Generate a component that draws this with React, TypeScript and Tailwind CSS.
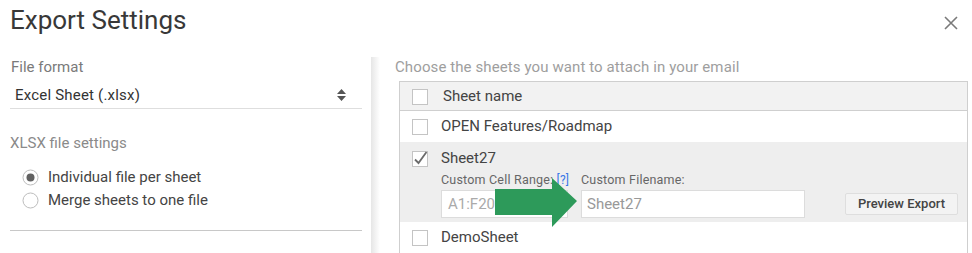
import React from "react";

const Box: React.FC<{ checked?: boolean }> = ({ checked }) => (
  <svg width="17" height="17" viewBox="0 0 17 17" className="shrink-0">
    <rect x="0.5" y="1.5" width="15" height="15" fill="white" stroke="#c4c4c4" />
    {checked && (
      <path d="M3 9.5 L6.5 13 L14.5 2" fill="none" stroke="#6b6b6b" strokeWidth="1.8" />
    )}
  </svg>
);

const Radio: React.FC<{ on?: boolean }> = ({ on }) => (
  <svg width="17" height="17" viewBox="0 0 17 17" className="shrink-0">
    <circle cx="8.5" cy="8.5" r="7.5" fill="white" stroke="#bdbdbd" />
    {on && <circle cx="8.5" cy="8.5" r="4" fill="#616161" />}
  </svg>
);

export default function App() {
  return (
    <div className="relative w-[972px] h-[253px] overflow-hidden bg-white font-['Roboto',sans-serif]">
      <div className="flex h-[52px] items-start justify-between pl-[10px] pr-[14px]">
        <h1 className="mt-[3px] text-[26px] leading-[34px] text-[#383838]">Export Settings</h1>
        <svg width="14" height="14" viewBox="0 0 14 14" className="mt-[16px]">
          <path d="M1 1 L13 13 M13 1 L1 13" stroke="#7a7a7a" strokeWidth="1.6" />
        </svg>
      </div>

      <div className="flex">
        {/* left column */}
        <div className="ml-[10px] w-[352px] pt-[5px]">
          <div className="pl-[1px] text-[15px] leading-[20px] text-[#7a7a7a]">File format</div>
          <div className="flex items-center justify-between border-b border-[#dedede] pt-[8px] pb-[3px] pl-[5px] pr-[16px]">
            <span className="text-[15px] leading-[20px] tracking-[0.2px] text-[#333]">Excel Sheet (.xlsx)</span>
            <svg width="9" height="12" viewBox="0 0 9 12">
              <path d="M4.5 0 L9 5 L0 5 Z M0 7 L9 7 L4.5 12 Z" fill="#555" />
            </svg>
          </div>
          <div className="mt-[24px] text-[15px] leading-[20px] text-[#8a8a8a]">XLSX file settings</div>
          <div className="mt-[13px] pl-[12px]">
            <label className="flex h-[23px] items-center gap-[9px] text-[15px] text-[#444]">
              <Radio on />
              Individual file per sheet
            </label>
            <label className="flex h-[23px] items-center gap-[9px] text-[15px] text-[#444]">
              <Radio />
              Merge sheets to one file
            </label>
          </div>
          <div className="mt-[18px] border-t border-[#c8c8c8]" />
        </div>

        {/* divider */}
        <div className="ml-[9px] mt-[5px] h-[200px] w-[9px] bg-gradient-to-r from-[#e6e6e6] to-white" />

        {/* right column */}
        <div className="ml-[15px] pt-[5px]">
          <div className="whitespace-nowrap text-[15px] leading-[20px] tracking-[0.1px] text-[#9e9e9e]">
            Choose the sheets you want to attach in your email
          </div>
          <div className="ml-[4px] mt-[4px] w-[569px] border border-[#cfcfcf] text-[15px] text-[#444]">
            <div className="flex h-[29px] items-center gap-[14px] border-b border-[#cfcfcf] bg-[#f2f2f2] pl-[12px]">
              <Box />
              <span>Sheet name</span>
            </div>
            <div className="flex h-[31px] items-center gap-[12px] pl-[12px]">
              <Box />
              <span>OPEN Features/Roadmap</span>
            </div>
            <div className="h-[80px] bg-[#eeeeee] pl-[12px]">
              <div className="flex h-[30px] items-center gap-[12px] pt-[2px]">
                <Box checked />
                <span>Sheet27</span>
              </div>
              <div className="flex items-start pl-[29px]">
                <div className="w-[127px]">
                  <div className="whitespace-nowrap text-[12.5px] leading-[16px] tracking-[0.2px] text-[#666]">
                    Custom Cell Range: <span className="text-[12px] text-[#3b78e7]">[?]</span>
                  </div>
                  <div className="mt-[2px] flex h-[28px] items-center border border-[#dcdcdc] bg-white pl-[6px] text-[15px] text-[#aaa]">
                    A1:F20
                  </div>
                </div>
                <div className="ml-[13px] w-[224px]">
                  <div className="whitespace-nowrap text-[12.5px] leading-[16px] tracking-[0.2px] text-[#666]">Custom Filename:</div>
                  <div className="mt-[2px] flex h-[28px] items-center border border-[#dcdcdc] bg-white pl-[5px] text-[15px] text-[#999]">
                    Sheet27
                  </div>
                </div>
                <button className="ml-[40px] mt-[21px] h-[22px] w-[113px] rounded-[2px] border border-[#dedede] bg-[#f3f3f3] text-[13px] font-medium text-[#444]">
                  Preview Export
                </button>
              </div>
            </div>
            <div className="flex h-[31px] items-center gap-[12px] pl-[12px]">
              <Box />
              <span>DemoSheet</span>
            </div>
          </div>
        </div>
      </div>

      {/* green arrow annotation */}
      <svg className="absolute left-[495px] top-[178px]" width="83" height="50" viewBox="0 0 83 50">
        <path d="M0 11 L57 11 L57 0 L82 23 L57 49 L57 37 L0 37 Z" fill="#2d9a5a" />
      </svg>
    </div>
  );
}
